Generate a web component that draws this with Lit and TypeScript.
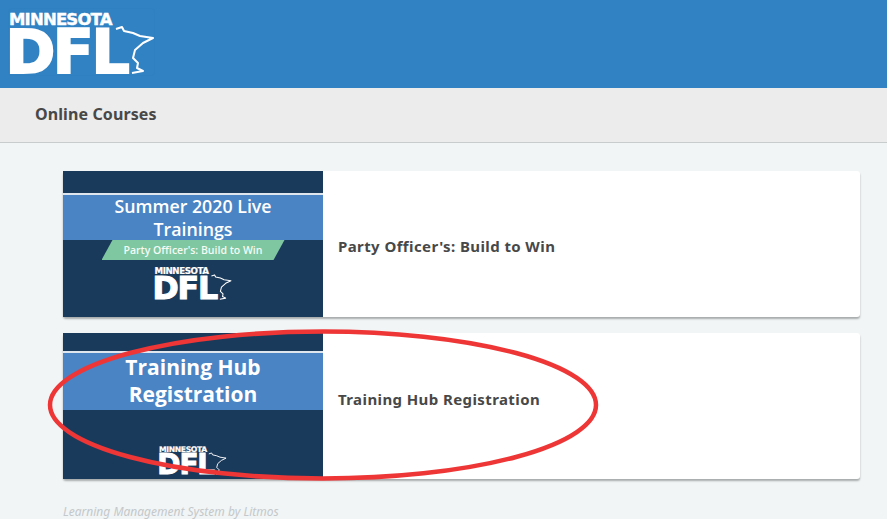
import { LitElement, css, html } from "lit";
import { customElement, property } from "lit/decorators.js";

// outline of the state, in the same units as the header logo
const STATE_OUTLINE =
  "M107 17 L113 15 L115 19 L124 21 L131 24 L144 26 L134 31 L126 38 L124 46 L129 51 L128 56 L134 59 L123 61";

@customElement("dfl-logo")
export class DflLogo extends LitElement {
  @property({ type: Number })
  public width = 146;

  render() {
    const scale = this.width / 146;
    return html`<div class="mark" style="font-size: ${scale}px">
      <div class="small">MINNESOTA</div>
      <div class="big">DFL</div>
      <svg
        class="state"
        width="${this.width}"
        height="${63 * scale}"
        viewBox="0 0 146 63"
      >
        <path d="${STATE_OUTLINE}"></path>
      </svg>
    </div>`;
  }

  public static override styles = css`
    :host {
      display: block;
      line-height: 0;
    }
    .mark {
      position: relative;
      width: 146em;
      height: 62em;
      box-sizing: border-box;
      padding-top: 2em;
      color: #fff;
      font-family: "DejaVu Sans", sans-serif;
      font-weight: 700;
      white-space: nowrap;
    }
    .small {
      font-size: 16.5em;
      height: 0.727em;
      margin-bottom: 0.27em;
      line-height: 0.727em;
      letter-spacing: -0.05em;
      -webkit-text-stroke: 0.025em #fff;
    }
    .big {
      font-size: 60em;
      height: 0.733em;
      line-height: 0.733em;
      letter-spacing: -0.04em;
      margin-left: -0.06em;
      -webkit-text-stroke: 0.035em #fff;
    }
    .state {
      position: absolute;
      left: 0;
      top: 0;
    }
    .state path {
      fill: none;
      stroke: #fff;
      stroke-width: 2px;
      stroke-linejoin: round;
    }
  `;
}

interface Course {
  title: string;
  lines: string[];
  ribbon?: string;
}

const COURSES: Course[] = [
  {
    title: "Party Officer's: Build to Win",
    lines: ["Summer 2020 Live", "Trainings"],
    ribbon: "Party Officer's: Build to Win",
  },
  {
    title: "Training Hub Registration",
    lines: ["Training Hub", "Registration"],
  },
];

@customElement("course-card")
export class CourseCard extends LitElement {
  @property({ attribute: false })
  public course!: Course;

  render() {
    const { title, lines, ribbon } = this.course;
    const kind = ribbon ? "ribbon" : "plain";
    return html`<div class="thumb thumb--${kind}">
        <div class="band">${lines.map((l) => html`<div>${l}</div>`)}</div>
        ${ribbon ? html`<div class="ribbon">${ribbon}</div>` : ""}
        <dfl-logo class="thumb-logo" .width=${ribbon ? 77 : 68}></dfl-logo>
      </div>
      <div class="title title--${kind}">${title}</div>`;
  }

  public static override styles = css`
    :host {
      display: flex;
      height: 146px;
      background: #fff;
      border-radius: 3px;
      box-shadow: 0 2px 2px rgba(0, 0, 0, 0.3);
    }
    .thumb {
      width: 260px;
      flex: none;
      display: flex;
      flex-direction: column;
      align-items: center;
      background: #1a3a5c;
    }
    .band {
      align-self: stretch;
      box-sizing: border-box;
      background: #4a84c4;
      border-top: 2px solid #dfe6ee;
      color: #fff;
      text-align: center;
      font-family: "Open Sans", sans-serif;
    }
    .thumb--ribbon .band {
      margin-top: 22px;
      height: 47px;
      font-size: 17.8px;
      font-weight: 600;
      line-height: 23px;
    }
    .thumb--plain .band {
      margin-top: 18px;
      height: 59px;
      padding-top: 1px;
      font-size: 21px;
      font-weight: 700;
      line-height: 27px;
    }
    .ribbon {
      width: 183px;
      height: 20px;
      background: #7fc7a0;
      clip-path: polygon(6% 0, 100% 0, 94% 100%, 0 100%);
      color: #f4faf6;
      text-align: center;
      font-family: "Open Sans", sans-serif;
      font-size: 10.5px;
      font-weight: 600;
      line-height: 20px;
    }
    .thumb--ribbon .thumb-logo {
      margin-top: 7px;
    }
    .thumb--plain .thumb-logo {
      margin-top: 36px;
    }
    .title {
      align-self: center;
      padding-left: 15px;
      color: #484848;
      font-family: "Noto Sans", sans-serif;
      font-size: 15px;
      font-weight: 700;
      letter-spacing: 0.4px;
    }
    .title--ribbon {
      padding-top: 4px;
    }
    .title--plain {
      padding-bottom: 14px;
    }
  `;
}

@customElement("app-root")
export class AppRoot extends LitElement {
  render() {
    return html`<header class="top">
        <div class="logo-box"><dfl-logo></dfl-logo></div>
      </header>
      <div class="subbar">Online Courses</div>
      <main class="courses">
        ${COURSES.map((c) => html`<course-card .course=${c}></course-card>`)}
      </main>
      <footer class="foot">Learning Management System by Litmos</footer>
      <svg class="marker" width="887" height="519" viewBox="0 0 887 519">
        <ellipse cx="323" cy="405" rx="273" ry="73.5"></ellipse>
      </svg>`;
  }

  public static override styles = css`
    :host {
      display: block;
      position: relative;
      width: 887px;
      height: 519px;
      overflow: hidden;
      background: #f1f5f6;
      font-family: "Noto Sans", sans-serif;
    }
    .top {
      height: 88px;
      box-sizing: border-box;
      padding: 8px 0 0 8px;
      background: #3182c3;
    }
    .logo-box {
      width: 147px;
      height: 68px;
      box-sizing: border-box;
      padding: 3px 0 0 0;
      border: 1px solid #2f80c0;
      border-radius: 4px;
    }
    .subbar {
      height: 55px;
      box-sizing: border-box;
      padding: 16px 0 0 35px;
      background: #ececec;
      border-bottom: 1px solid #c9cccd;
      color: #484848;
      font-size: 16px;
      font-weight: 700;
      letter-spacing: 0.1px;
      line-height: 21px;
    }
    .courses {
      display: flex;
      flex-direction: column;
      gap: 16px;
      padding: 28px 27px 0 63px;
    }
    .foot {
      padding: 25px 0 0 63px;
      color: #c4c8ca;
      font-size: 12px;
      font-style: italic;
      line-height: 15px;
    }
    .marker {
      position: absolute;
      left: 0;
      top: 0;
      pointer-events: none;
    }
    .marker ellipse {
      fill: none;
      stroke: #ee3636;
      stroke-width: 4.5px;
    }
  `;
}
